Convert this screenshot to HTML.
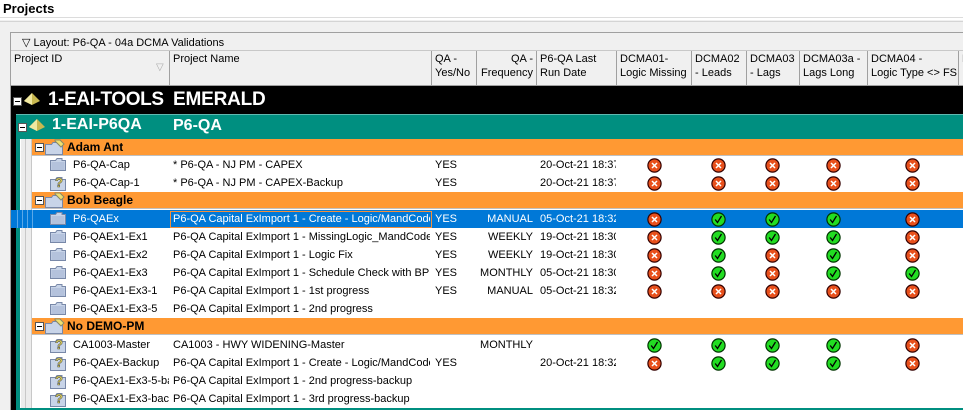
<!DOCTYPE html>
<html><head><meta charset="utf-8"><style>
*{margin:0;padding:0;box-sizing:border-box}
body{width:963px;height:410px;overflow:hidden;background:#fff;font-family:"Liberation Sans",Arial,sans-serif;font-size:11px;color:#000;position:relative}
.a{position:absolute;white-space:nowrap;overflow:hidden}
.h{font-size:11px;line-height:14px;color:#000}
.hc{position:absolute;top:51px;height:35px;border-right:1px solid #a0a0a0;background:#f0f0f0;padding:1px 3px;font-size:11px;line-height:14px;overflow:hidden;white-space:nowrap}
.grp{position:absolute;left:32px;right:0;height:17px;background:#ff9933;border-bottom:1px solid #c0c0c0}
.mb{position:absolute;width:9px;height:9px;border:1px solid #555;background:#fff}
.mb:after{content:"";position:absolute;left:1px;top:3px;width:5px;height:1px;background:#000}
</style></head><body>
<div class="a" style="left:3px;top:1px;font-weight:bold;font-size:13px">Projects</div>
<div class="a" style="left:0;top:17px;width:963px;height:1px;background:#dcdcdc"></div>
<div class="a" style="left:0;top:20px;width:963px;height:390px;background:#f0f0f0"></div>
<div class="a" style="left:0;top:21px;width:963px;height:1px;background:#d4d4d4"></div>
<div class="a" style="left:10px;top:32px;width:953px;height:378px;border-left:1px solid #a0a0a0;border-top:1px solid #a0a0a0;background:#fff"></div>
<div class="a" style="left:11px;top:33px;width:952px;height:18px;background:#f0f0f0;border-bottom:1px solid #c8c8c8"></div>
<div class="a h" style="left:22px;top:36px">▽ Layout: P6-QA - 04a DCMA Validations</div>
<div class="hc" style="left:11px;width:159px">Project ID<span style="position:absolute;left:145px;top:10px;color:#aaa;font-size:10px">▽</span></div>
<div class="hc" style="left:170px;width:262px">Project Name</div>
<div class="hc" style="left:432px;width:45px">QA -<br>Yes/No</div>
<div class="hc" style="left:477px;width:60px;text-align:right">QA -<br>Frequency</div>
<div class="hc" style="left:537px;width:80px">P6-QA Last<br>Run Date</div>
<div class="hc" style="left:617px;width:75px">DCMA01-<br>Logic Missing</div>
<div class="hc" style="left:692px;width:55px">DCMA02<br>- Leads</div>
<div class="hc" style="left:747px;width:53px">DCMA03<br>- Lags</div>
<div class="hc" style="left:800px;width:68px">DCMA03a -<br>Lags Long</div>
<div class="hc" style="left:868px;width:91px">DCMA04 -<br>Logic Type &lt;&gt; FS</div>
<div class="hc" style="left:959px;width:10px">D</div>
<div class="a" style="left:11px;top:85px;width:952px;height:1px;background:#a0a0a0"></div>

<div class="a" style="left:11px;top:86px;width:5px;height:324px;background:#000"></div>
<div class="a" style="left:16px;top:114px;width:4px;height:296px;background:#008f80"></div>
<div class="a" style="left:20px;top:139px;width:12px;height:269px;background:#ececec;border-left:1px solid #fff"></div>
<div class="a" style="left:25px;top:139px;width:1px;height:269px;background:#c8c8c8"></div>
<div class="a" style="left:31px;top:139px;width:1px;height:269px;background:#c8c8c8"></div>
<div class="a" style="left:16px;top:408px;width:947px;height:2px;background:#008f80"></div>

<div class="a" style="left:11px;top:86px;width:952px;height:28px;background:#000"></div>
<div class="mb" style="left:13px;top:97px"></div>
<svg class="a" style="left:24px;top:93px" width="16" height="12"><polygon points="8,0 16,8 8,12 0,8" fill="#c8b850"/><polygon points="8,0 8,12 0,8" fill="#f0e8a0"/></svg>
<div class="a" style="left:48px;top:87px;color:#fff;font-weight:bold;font-size:19px;line-height:26px;letter-spacing:-0.4px">1-EAI-TOOLS</div>
<div class="a" style="left:173px;top:87px;color:#fff;font-weight:bold;font-size:19px;line-height:26px;letter-spacing:-0.2px">EMERALD</div>

<div class="a" style="left:16px;top:114px;width:947px;height:25px;background:#008f80;border-top:1px solid #60b8b0"></div>
<div class="mb" style="left:18px;top:123px"></div>
<svg class="a" style="left:29px;top:119px" width="16" height="12"><polygon points="8,0 16,8 8,12 0,8" fill="#c8b850"/><polygon points="8,0 8,12 0,8" fill="#f0e8a0"/></svg>
<div class="a" style="left:52px;top:115px;color:#fff;font-weight:bold;font-size:16px;line-height:20px">1-EAI-P6QA</div>
<div class="a" style="left:173px;top:116px;color:#fff;font-weight:bold;font-size:16px;line-height:20px">P6-QA</div>

<div id="rows"></div>
<script>
var X='<svg width="15" height="15"><circle cx="7.5" cy="7.5" r="6.6" fill="#e8501c" stroke="#300" stroke-width="1.2"/><path d="M5 5L10 10M10 5L5 10" stroke="#fff" stroke-width="1.5"/></svg>';
var C='<svg width="15" height="15"><circle cx="7.5" cy="7.5" r="6.6" fill="#22dd22" stroke="#030" stroke-width="1.2"/><path d="M4.2 7.5L6.5 10.5L10.5 4" stroke="#000" stroke-width="1.3" fill="none"/></svg>';
var fold='<svg width="16" height="14"><path d="M0.5 3.5h5l1.5 -2h5v2h3.5v10h-15z" fill="#c8d4e8" stroke="#7888a8"/><rect x="1.5" y="5" width="13" height="8" fill="#b4c2dc"/></svg>';
var q='<svg width="16" height="16"><path d="M0.5 4.5h5l1.5 -2h5v2h3.5v11h-15z" fill="#c8d4e8" stroke="#7888a8"/><text x="5" y="12" font-family="Liberation Sans" font-weight="bold" font-size="13" fill="#f0e060" stroke="#554" stroke-width="0.6">?</text></svg>';
var gf='<svg width="20" height="16"><path d="M0.5 5.5h6l1.5 -2h6v2h3.5v10h-17z" fill="#c8d4e8" stroke="#7888a8"/><path d="M10 1l5 0 4 4 -3 3 -6 -6z" fill="#f0e070" stroke="#886"/></svg>';
var D=[
['g',139,'Adam Ant'],
['r',156,fold,'P6-QA-Cap','* P6-QA - NJ PM - CAPEX','YES','','20-Oct-21 18:37','XXXXX'],
['r',174,q,'P6-QA-Cap-1','* P6-QA - NJ PM - CAPEX-Backup','YES','','20-Oct-21 18:37','XXXXX'],
['g',192,'Bob Beagle'],
['s',210,fold,'P6-QAEx','P6-QA Capital ExImport 1 - Create -  Logic/MandCodes','YES','MANUAL','05-Oct-21 18:32','XCCCX'],
['r',228,fold,'P6-QAEx1-Ex1','P6-QA Capital ExImport 1 - MissingLogic_MandCodes_','YES','WEEKLY','19-Oct-21 18:30','XCCCX'],
['r',246,fold,'P6-QAEx1-Ex2','P6-QA Capital ExImport 1 - Logic Fix','YES','WEEKLY','19-Oct-21 18:30','XCXCX'],
['r',264,fold,'P6-QAEx1-Ex3','P6-QA Capital ExImport 1 - Schedule Check with BP e','YES','MONTHLY','05-Oct-21 18:30','XCXCC'],
['r',282,fold,'P6-QAEx1-Ex3-1','P6-QA Capital ExImport 1 - 1st progress','YES','MANUAL','05-Oct-21 18:32','XXXXX'],
['r',300,fold,'P6-QAEx1-Ex3-5','P6-QA Capital ExImport 1 - 2nd progress','','','',''],
['g',318,'No DEMO-PM'],
['r',336,q,'CA1003-Master','CA1003 - HWY WIDENING-Master','','MONTHLY','','CCCCX'],
['r',354,q,'P6-QAEx-Backup','P6-QA Capital ExImport 1 - Create -  Logic/MandCodes','YES','','20-Oct-21 18:32','XCCCX'],
['r',372,q,'P6-QAEx1-Ex3-5-backup','P6-QA Capital ExImport 1 - 2nd progress-backup','','','',''],
['r',390,q,'P6-QAEx1-Ex3-backup','P6-QA Capital ExImport 1 - 3rd progress-backup','','','','']];
var cx=[647,711,765,826,905],h='';
D.forEach(function(d){
 if(d[0]=='g'){h+='<div class="grp" style="top:'+d[1]+'px"></div><div class="mb" style="left:35px;top:'+(d[1]+4)+'px"></div><div class="a" style="left:45px;top:'+(d[1])+'px">'+gf+'</div><div class="a" style="left:67px;top:'+(d[1]+1)+'px;font-weight:bold;font-size:12px;line-height:15px">'+d[2]+'</div>';return;}
 var s=d[0]=='s',y=d[1],col=s?'#fff':'#000';
 h+='<div class="a" style="left:'+(s?11:35)+'px;top:'+y+'px;width:'+(s?952:928)+'px;height:18px;background:'+(s?'#0078d7':'#fff')+'"></div>';
 if(s){[17,22,27,32].forEach(function(x){h+='<div class="a" style="left:'+x+'px;top:'+y+'px;width:1px;height:18px;background:#5aa8e8"></div>'});
  h+='<div class="a" style="left:170px;top:'+(y+1)+'px;width:262px;height:17px;border:1px solid #f09040"></div>';}
 h+='<div class="a" style="left:50px;top:'+(y+1)+'px">'+d[2]+'</div>';
 h+='<div class="a" style="left:73px;top:'+(y+2)+'px;width:96px;line-height:14px;color:'+col+'">'+d[3]+'</div>';
 h+='<div class="a" style="left:173px;top:'+(y+2)+'px;width:257px;line-height:14px;color:'+col+'">'+d[4]+'</div>';
 h+='<div class="a" style="left:435px;top:'+(y+2)+'px;line-height:14px;color:'+col+'">'+d[5]+'</div>';
 h+='<div class="a" style="left:477px;top:'+(y+2)+'px;width:56px;text-align:right;line-height:14px;color:'+col+'">'+d[6]+'</div>';
 h+='<div class="a" style="left:540px;top:'+(y+2)+'px;width:76px;line-height:14px;color:'+col+'">'+d[7]+'</div>';
 for(var i=0;i<d[8].length;i++)h+='<div class="a" style="left:'+cx[i]+'px;top:'+(y+2)+'px">'+(d[8][i]=='X'?X:C)+'</div>';
});
document.getElementById('rows').innerHTML=h;
</script>
</body></html>
